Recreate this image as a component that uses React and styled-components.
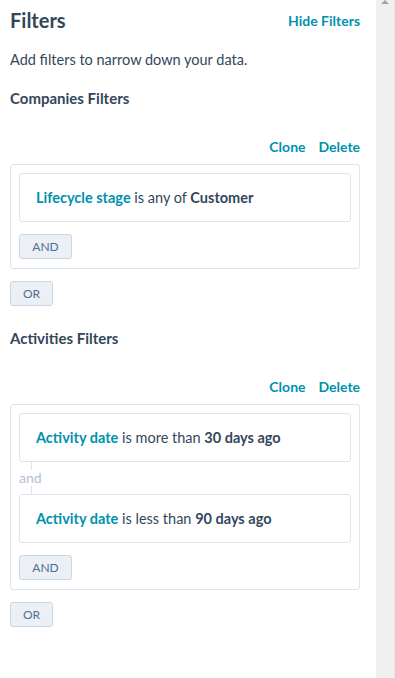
import styled, { createGlobalStyle } from "styled-components";

const GlobalStyle = createGlobalStyle`
  html, body {
    margin: 0;
    padding: 0;
    background: #fff;
  }
  body {
    font-family: Lato, "Open Sans", sans-serif;
    color: #33475b;
  }
`;

const FILTER_GROUPS = [
  {
    title: "Companies Filters",
    rules: [{ field: "Lifecycle stage", op: "is any of", value: "Customer" }],
  },
  {
    title: "Activities Filters",
    rules: [
      { field: "Activity date", op: "is more than", value: "30 days ago" },
      { field: "Activity date", op: "is less than", value: "90 days ago" },
    ],
  },
];

function App() {
  return (
    <>
      <GlobalStyle />
      <S.Page>
        <S.Panel>
          <S.Header>
            <S.Title>Filters</S.Title>
            <S.Link>Hide Filters</S.Link>
          </S.Header>
          <S.Intro>Add filters to narrow down your data.</S.Intro>
          {FILTER_GROUPS.map((group, idx) => (
            <S.Group key={idx}>
              <S.GroupTitle>{group.title}</S.GroupTitle>
              <S.Actions>
                <S.Link>Clone</S.Link>
                <S.Link>Delete</S.Link>
              </S.Actions>
              <S.Card>
                {group.rules.map((rule, i) => (
                  <div key={i}>
                    {i > 0 && (
                      <S.Joiner>
                        <span>and</span>
                      </S.Joiner>
                    )}
                    <S.Rule>
                      <span>
                        <S.Field>{rule.field}</S.Field> {rule.op}{" "}
                        <S.Value>{rule.value}</S.Value>
                      </span>
                    </S.Rule>
                  </div>
                ))}
                <S.Button>AND</S.Button>
              </S.Card>
              <S.Button $outer>OR</S.Button>
            </S.Group>
          ))}
        </S.Panel>
        <S.Scrollbar>
          <S.Arrow />
        </S.Scrollbar>
      </S.Page>
    </>
  );
}
export default App;

const Page = styled.div`
  display: flex;
  width: 395px;
  height: 678px;
  overflow: hidden;
`;

const Panel = styled.div`
  width: 377px;
  box-sizing: border-box;
  padding: 6px 16px 0 10px;
`;

const Header = styled.div`
  display: flex;
  justify-content: space-between;
  align-items: center;
`;

const Title = styled.h1`
  margin: 0;
  font-size: 20px;
  font-weight: 700;
  line-height: 28px;
  color: #33475b;
`;

const Link = styled.span`
  font-size: 14px;
  font-weight: 700;
  color: #0091ae;
  cursor: pointer;
`;

const Intro = styled.p`
  margin: 16px 0 0;
  font-size: 14.5px;
  line-height: 20px;
  color: #33475b;
`;

const Group = styled.section`
  margin-top: 18px;
  & + & {
    margin-top: 22px;
  }
`;

const GroupTitle = styled.h2`
  margin: 0;
  font-size: 15px;
  font-weight: 700;
  line-height: 20px;
  color: #33475b;
`;

const Actions = styled.div`
  display: flex;
  justify-content: flex-end;
  gap: 13px;
  margin-top: 31px;
  line-height: 16px;
`;

const Card = styled.div`
  margin-top: 9px;
  border: 1px solid #dfe3eb;
  border-radius: 3px;
  padding: 8px 8px 9px;
`;

const Rule = styled.div`
  border: 1px solid #dfe3eb;
  border-radius: 3px;
  height: 47px;
  display: flex;
  align-items: center;
  padding-left: 16px;
  font-size: 14.5px;
  color: #33475b;
`;

const Field = styled.span`
  color: #0091ae;
  font-weight: 700;
`;

const Value = styled.span`
  font-weight: 700;
`;

const Joiner = styled.div`
  position: relative;
  height: 32px;
  display: flex;
  align-items: center;
  font-size: 14px;
  color: #b0c1d4;
  &::before {
    content: "";
    position: absolute;
    left: 12px;
    top: 0;
    bottom: 0;
    border-left: 1px solid #dfe3eb;
  }
  span {
    position: relative;
    background: #fff;
    line-height: 16px;
  }
`;

const Button = styled.button`
  display: block;
  margin-top: 12px;
  height: 25px;
  padding: 0 12px;
  min-width: ${({ $outer }) => ($outer ? "43px" : "53px")};
  background: #eaf0f6;
  border: 1px solid #cbd6e2;
  border-radius: 3px;
  font-family: Lato, "Open Sans", sans-serif;
  font-size: 12px;
  color: #506e91;
`;

const Scrollbar = styled.div`
  width: 18px;
  background: #f0f0f0;
  position: relative;
  border-right: 1px solid #e6e6e6;
`;

const Arrow = styled.div`
  position: absolute;
  left: 5px;
  top: 0;
  width: 0;
  height: 0;
  border-left: 4px solid transparent;
  border-right: 4px solid transparent;
  border-bottom: 4px solid #a3a3a3;
`;

const S = {
  Page,
  Panel,
  Header,
  Title,
  Link,
  Intro,
  Group,
  GroupTitle,
  Actions,
  Card,
  Rule,
  Field,
  Value,
  Joiner,
  Button,
  Scrollbar,
  Arrow,
};
